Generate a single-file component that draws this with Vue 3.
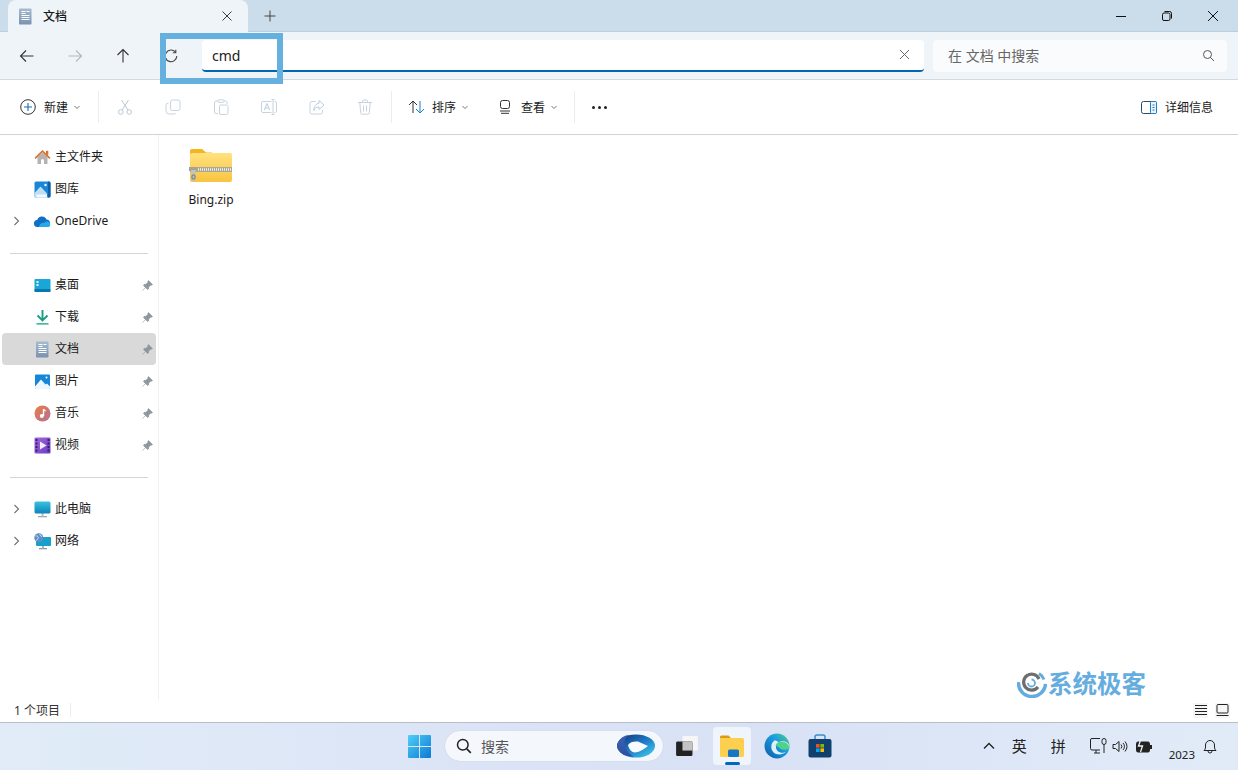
<script setup>
const icons = {
  home: '<path d="M3.500 8v7h3.500v-3.500a1.500 1.500 0 0 1 3 0V15h3.500V8L8.500 3.500z" fill="#b7b3b0"/><path d="M.5 8.800 8.500 1l8 7.800-1.200 1.100-6.800-6.600-6.800 6.600z" fill="#d8722f"/><rect x="12" y="1.800" width="2.300" height="4" fill="#d8722f"/>',
  gallery: '<rect x=".5" y=".5" width="16" height="16" rx="1.500" fill="#1b86d8"/><path d="M14 .5h1A1.500 1.500 0 0 1 16.500 2v13a1.500 1.500 0 0 1-1.500 1.500h-1z" fill="#0f5fa8"/><path d="M.5 12 6.500 5.500 13 12.500v4H2A1.500 1.500 0 0 1 .5 15z" fill="#bfdff6"/><rect x="2.500" y="13.500" width="10.500" height="3" fill="#f4fafe"/><circle cx="11.500" cy="4" r="1.200" fill="#fff"/>',
  cloud: '<path d="M3.800 14A3.500 3.500 0 0 1 3.200 7 5 5 0 0 1 12.500 6.500 3.800 3.800 0 0 1 13 14z" fill="#0f6fc6"/><path d="M5 14c.3-3.200 3-4.900 5.500-4.200.6-1 1.900-1.500 3.100-1.200 2.200.5 3 2.700 2.500 3.800-.4.900-1.200 1.600-2.500 1.600z" fill="#28a8ea"/>',
  desktop: '<rect x=".5" y="2" width="16" height="13" rx="1" fill="#1aa6d6"/><rect x=".5" y="12" width="16" height="3" rx="1" fill="#0a77ad"/><rect x="2.500" y="4" width="2" height="2" fill="#dff5fb"/><rect x="2.500" y="7" width="2" height="2" fill="#dff5fb"/>',
  download: '<path d="M8.500 1v10M3.500 6.500 8.500 11.500 13.500 6.500" fill="none" stroke="#1c9c80" stroke-width="1.900"/><rect x="2.500" y="14" width="12" height="1.700" fill="#4ab9a2"/>',
  docs: '<defs><linearGradient id="dg" x1="0" y1="0" x2="0" y2="1"><stop offset="0" stop-color="#a6bbd2"/><stop offset="1" stop-color="#7892b0"/></linearGradient></defs><rect x="2" y=".5" width="12.500" height="16" rx=".8" fill="url(#dg)"/><path d="M4.500 3.500h4M4.500 5.500h4M9.500 3.500h3M4.500 7.500h8M4.500 9.500h8M4.500 11.500h8" stroke="#fff" stroke-width="1"/>',
  picture: '<rect x="1" y="1.500" width="15" height="14.500" rx="1" fill="#1686d9"/><path d="M1 13.500 7 6.500l4.500 5 1.500-1 3 3V15a1 1 0 0 1-1 1H2a1 1 0 0 1-1-1z" fill="#eef7fd"/><circle cx="12.500" cy="4.500" r="1" fill="#fff"/>',
  music: '<defs><linearGradient id="mg" x1="0" y1="0" x2="1" y2="1"><stop offset="0" stop-color="#ee7d3c"/><stop offset="1" stop-color="#b0709e"/></linearGradient></defs><circle cx="8.500" cy="8.500" r="8" fill="url(#mg)"/><path d="M9.500 4v7" stroke="#fff" stroke-width="1.400"/><circle cx="7.800" cy="11" r="2" fill="#fff"/><path d="M9.500 4c.3 1.300 1.300 1.700 2.300 2" stroke="#fff" stroke-width="1.200" fill="none"/>',
  video: '<defs><linearGradient id="vg" x1="0" y1="0" x2="1" y2="1"><stop offset="0" stop-color="#a267e0"/><stop offset="1" stop-color="#6b3cc0"/></linearGradient></defs><rect x=".5" y=".5" width="16" height="16" rx="1" fill="url(#vg)"/><path d="M6 4.500v8l6.500-4z" fill="#f3ecff"/><g fill="#371b70"><rect x="1.500" y="2" width="2" height="2"/><rect x="1.500" y="5.500" width="2" height="2"/><rect x="1.500" y="9" width="2" height="2"/><rect x="1.500" y="12.500" width="2" height="2"/><rect x="13.500" y="2" width="2" height="2"/><rect x="13.500" y="5.500" width="2" height="2"/><rect x="13.500" y="9" width="2" height="2"/><rect x="13.500" y="12.500" width="2" height="2"/></g>',
  pc: '<rect x="4" y="15" width="9" height="1.300" fill="#9aa8b3"/><rect x="7.500" y="12" width="2" height="3.500" fill="#b3bec6"/><defs><linearGradient id="pg" x1="0" y1="0" x2="0" y2="1"><stop offset="0" stop-color="#38c3e0"/><stop offset="1" stop-color="#0c83b8"/></linearGradient></defs><rect x=".5" y=".5" width="16" height="12" rx="1.500" fill="url(#pg)"/>',
  network: '<rect x="5" y="15" width="8" height="1.300" fill="#8a9aa6"/><rect x="8" y="12.500" width="2" height="3" fill="#a8b5be"/><rect x="2" y="4" width="15" height="9" rx="1" fill="#17a0cc"/><circle cx="4.800" cy="4.800" r="4.500" fill="#5b8fc6"/><path d="M1.500 3c1.500-.5 2.800.5 2.800 1.500S3 6 2.500 7.500M6 1c-.5 1 .5 2 2 2.500" stroke="#d8e8f5" fill="none"/>'
}

const pinned = [
  { label: '桌面', icon: 'desktop' },
  { label: '下载', icon: 'download' },
  { label: '文档', icon: 'docs', active: true },
  { label: '图片', icon: 'picture' },
  { label: '音乐', icon: 'music' },
  { label: '视频', icon: 'video' }
]
const topItems = [
  { label: '主文件夹', icon: 'home' },
  { label: '图库', icon: 'gallery' },
  { label: 'OneDrive', icon: 'cloud', expand: true }
]
const bottomItems = [
  { label: '此电脑', icon: 'pc', expand: true },
  { label: '网络', icon: 'network', expand: true }
]
</script>

<template>
  <div class="window">
    <div class="titlebar">
      <div class="tab">
        <svg class="tab-icon" width="17" height="17" viewBox="0 0 17 17" v-html="icons.docs"></svg>
        <span class="tab-title">文档</span>
        <svg class="tab-close" width="12" height="12" viewBox="0 0 12 12"><path d="M1.500 1.500l9 9M10.500 1.500l-9 9" stroke="#3c3c3c" fill="none"/></svg>
      </div>
      <svg class="tab-add" width="12" height="12" viewBox="0 0 12 12"><path d="M6 .5v11M.5 6h11" stroke="#444" fill="none"/></svg>
      <div class="win-controls">
        <svg width="12" height="12" viewBox="0 0 12 12"><path d="M1 6.500h10" stroke="#111" fill="none"/></svg>
        <svg width="12" height="12" viewBox="0 0 12 12"><rect x="1.500" y="3" width="7.500" height="7.500" rx="1.500" stroke="#111" fill="none"/><path d="M3.500 1.500h5a2 2 0 0 1 2 2v5" stroke="#111" fill="none"/></svg>
        <svg width="12" height="12" viewBox="0 0 12 12"><path d="M1 1l10 10M11 1 1 11" stroke="#111" fill="none"/></svg>
      </div>
    </div>

    <div class="navbar">
      <div class="nav-btn"><svg width="16" height="16" viewBox="0 0 16 16"><path d="M14.500 8h-13M7 2.500 1.500 8 7 13.500" stroke="#333" fill="none" stroke-width="1.100"/></svg></div>
      <div class="nav-btn"><svg width="16" height="16" viewBox="0 0 16 16"><path d="M1.500 8h13M9 2.500 14.500 8 9 13.500" stroke="#b4b8bd" fill="none" stroke-width="1.100"/></svg></div>
      <div class="nav-btn"><svg width="16" height="16" viewBox="0 0 16 16"><path d="M8 14.500v-13M2.500 7 8 1.500 13.500 7" stroke="#333" fill="none" stroke-width="1.100"/></svg></div>
      <div class="nav-btn"><svg width="14" height="14" viewBox="0 0 14 14"><path d="M11.500 3.200A5.800 5.800 0 1 0 12.800 7" stroke="#444" fill="none" stroke-width="1.100"/><path d="M11.800.8v3h-3" stroke="#444" fill="none" stroke-width="1.100"/></svg></div>
      <div class="address">
        <span class="address-text">cmd</span>
        <svg width="11" height="11" viewBox="0 0 11 11"><path d="M1 1l9 9M10 1l-9 9" stroke="#666" fill="none"/></svg>
      </div>
      <div class="search">
        <span class="search-text">在 文档 中搜索</span>
        <svg width="13" height="13" viewBox="0 0 13 13"><circle cx="5.500" cy="5.500" r="4" stroke="#555" fill="none"/><path d="M8.500 8.500l3.500 3.500" stroke="#555" fill="none"/></svg>
      </div>
    </div>

    <div class="toolbar">
      <div class="tool-group">
        <svg class="tool-plus" width="16" height="16" viewBox="0 0 16 16"><circle cx="8" cy="8" r="7.300" stroke="#333" fill="none"/><path d="M8 4v8M4 8h8" stroke="#0f6cbd" stroke-width="1.100" fill="none"/></svg>
        <span class="tool-label">新建</span>
        <svg class="chev" width="8" height="8" viewBox="0 0 8 8"><path d="M1.500 3 4 5.500 6.500 3" stroke="#777" fill="none"/></svg>
      </div>
      <i class="tool-sep sep-first"></i>
      <div class="tool-icons">
        <svg width="16" height="16" viewBox="0 0 16 16"><g stroke="#b9c9d9" fill="none"><circle cx="3.800" cy="13" r="2.300"/><circle cx="12.200" cy="13" r="2.300"/><path d="M5 11 11.500 1M11 11 4.500 1"/></g></svg>
        <svg width="16" height="16" viewBox="0 0 16 16"><g stroke="#c8d3de" fill="none"><rect x="5.500" y="1" width="9.500" height="10.500" rx="2"/><path d="M3.500 4A2.500 2.500 0 0 0 1 6.500V12a3 3 0 0 0 3 3h5a2.500 2.500 0 0 0 2-1.200"/></g></svg>
        <svg width="16" height="16" viewBox="0 0 16 16"><g stroke="#c8d3de" fill="none"><path d="M5 2H3a1.500 1.500 0 0 0-1.500 1.500V13A1.500 1.500 0 0 0 3 14.500h2M11 2h1.500A1.500 1.500 0 0 1 14 3.500V5"/><rect x="5" y=".8" width="6" height="2.500" rx=".8"/><rect x="6.500" y="6" width="8.500" height="9.500" rx="1.500"/></g></svg>
        <svg width="16" height="16" viewBox="0 0 16 16"><g stroke="#c8d3de" fill="none"><path d="M10.500 2.500H2a1.500 1.500 0 0 0-1.500 1.500v8A1.500 1.500 0 0 0 2 13.500h8.500M13.500 2.500H14A1.500 1.500 0 0 1 15.500 4v8a1.500 1.500 0 0 1-1.500 1.500h-.5M12 .5v15M10.500.5h3M10.500 15.500h3"/><path d="M3.300 11 6 4.500 8.700 11M4.300 9h3.400" stroke="#b8cee4"/></g></svg>
        <svg width="16" height="16" viewBox="0 0 16 16"><g stroke="#c8d3de" fill="none"><path d="M6.500 2.500H3A2 2 0 0 0 1 4.500V13a2 2 0 0 0 2 2h8.500a2 2 0 0 0 2-2v-2"/><path d="M10 1.500 15 6l-5 4.500V8C7 8 5.500 9.500 4.800 11.500 4.800 7.500 7 4.500 10 4.300z" stroke="#b8cee4"/></g></svg>
        <svg width="16" height="16" viewBox="0 0 16 16"><g stroke="#c8d3de" fill="none"><path d="M1 3.500h14M5.500 3.500V2.200A1.200 1.200 0 0 1 6.700 1h2.600a1.200 1.200 0 0 1 1.200 1.200v1.300M2.800 3.500l.9 10.300A1.500 1.500 0 0 0 5.200 15.200h5.600a1.500 1.500 0 0 0 1.500-1.400l.9-10.300M6.500 6.500v6M9.500 6.500v6"/></g></svg>
      </div>
      <i class="tool-sep sep-edit"></i>
      <div class="tool-group sort">
        <svg class="tool-ic" width="17" height="16" viewBox="0 0 17 16"><path d="M5 14V2M1 6l4-4 4 4" stroke="#333" fill="none"/><path d="M12 2v12M8 10l4 4 4-4" stroke="#1d7fc9" fill="none"/></svg>
        <span class="tool-label">排序</span>
        <svg class="chev" width="8" height="8" viewBox="0 0 8 8"><path d="M1.500 3 4 5.500 6.500 3" stroke="#777" fill="none"/></svg>
      </div>
      <div class="tool-group view">
        <svg class="tool-ic" width="12" height="14" viewBox="0 0 12 14"><rect x="1.500" y=".5" width="9" height="8" rx="2" stroke="#333" fill="none"/><path d="M1 11h10M2 13.300h8" stroke="#333" fill="none"/></svg>
        <span class="tool-label">查看</span>
        <svg class="chev" width="8" height="8" viewBox="0 0 8 8"><path d="M1.500 3 4 5.500 6.500 3" stroke="#777" fill="none"/></svg>
      </div>
      <i class="tool-sep"></i>
      <div class="dots"><i></i><i></i><i></i></div>
      <div class="details">
        <svg width="16" height="13" viewBox="0 0 16 13"><rect x=".5" y=".5" width="15" height="12" rx="2" stroke="#2f4a5e" fill="#fff"/><rect x="9.500" y=".5" width="6" height="12" rx="1" stroke="#1e7dc4" fill="#e8f3fb"/><path d="M11.500 4h2M11.500 6.500h2M11.500 9h2" stroke="#1e7dc4" fill="none"/></svg>
        <span class="tool-label">详细信息</span>
      </div>
    </div>

    <div class="main">
      <aside class="sidebar">
        <div class="group">
          <div v-for="item in topItems" :key="item.label" class="row">
            <svg v-if="item.expand" class="expander" width="8" height="10" viewBox="0 0 8 10"><path d="M1.500 1 5.500 5 1.500 9" stroke="#777" fill="none" stroke-width="1.200"/></svg>
            <svg class="row-icon" width="17" height="17" viewBox="0 0 17 17" v-html="icons[item.icon]"></svg>
            <span class="row-label">{{ item.label }}</span>
          </div>
        </div>
        <div class="divider"></div>
        <div class="group">
          <div v-for="item in pinned" :key="item.label" class="row" :class="{ active: item.active }">
            <svg class="row-icon" width="17" height="17" viewBox="0 0 17 17" v-html="icons[item.icon]"></svg>
            <span class="row-label">{{ item.label }}</span>
            <svg class="pin" width="11" height="11" viewBox="0 0 11 11"><path d="M6.500.5 10.500 4.500 9.500 5.200 8.800 5 6.800 7 6.500 9 5.500 9.500 1.500 5.500 2 4.500 4 4.200 6 2.200 5.800 1.500zM3.200 7.800.5 10.500" fill="#8c979f" stroke="#8c979f" stroke-width=".6"/></svg>
          </div>
        </div>
        <div class="divider"></div>
        <div class="group">
          <div v-for="item in bottomItems" :key="item.label" class="row">
            <svg class="expander" width="8" height="10" viewBox="0 0 8 10"><path d="M1.500 1 5.500 5 1.500 9" stroke="#777" fill="none" stroke-width="1.200"/></svg>
            <svg class="row-icon" width="17" height="17" viewBox="0 0 17 17" v-html="icons[item.icon]"></svg>
            <span class="row-label">{{ item.label }}</span>
          </div>
        </div>
      </aside>
      <section class="files">
        <div class="file">
          <svg width="44" height="35" viewBox="0 0 44 35">
            <defs><linearGradient id="fz" x1="0" y1="0" x2="0" y2="1"><stop offset="0" stop-color="#ffe27e"/><stop offset="1" stop-color="#f9c440"/></linearGradient></defs>
            <path d="M1 3a2 2 0 0 1 2-2h10l4 3.500h6V10H1z" fill="#f4b520"/>
            <rect x="1" y="5" width="42" height="29" rx="2" fill="url(#fz)"/>
            <rect x="1" y="19" width="42" height="5" fill="#a9a89a"/>
            <path d="M7 21.500h35" stroke="#f0efe2" stroke-width="2.400" stroke-dasharray="1 1"/>
            <rect x="0" y="19" width="8" height="4" fill="#a5a395"/>
            <rect x="2" y="22" width="5" height="11" fill="#c6c3ae"/>
            <rect x="3" y="27" width="3" height="4" rx="1" fill="none" stroke="#77766a"/>
          </svg>
          <span class="file-name">Bing.zip</span>
        </div>
      </section>
    </div>

    <div class="statusbar">
      <span class="status-text">1 个项目</span>
      <i class="status-sep"></i>
      <div class="view-btns">
        <span class="view-btn"><svg width="14" height="12" viewBox="0 0 14 12"><path d="M1 1.500h12M1 4.500h12M1 7.500h12M1 10.500h12" stroke="#222" fill="none"/></svg></span>
        <span class="view-btn"><svg width="13" height="12" viewBox="0 0 13 12"><rect x="1" y=".5" width="11" height="8.500" rx="1" stroke="#222" fill="none"/><path d="M.5 11.500h12" stroke="#222" fill="none"/></svg></span>
      </div>
    </div>

    <div class="taskbar">
      <div class="task-center">
        <svg class="start" width="23" height="23" viewBox="0 0 24 24">
          <defs><linearGradient id="wg" x1="0" y1="0" x2="1" y2="1"><stop offset="0" stop-color="#4fd0f5"/><stop offset="1" stop-color="#0c78d6"/></linearGradient></defs>
          <path d="M0 1a1 1 0 0 1 1-1h10.500v11.500H0zM12.500 0H23a1 1 0 0 1 1 1v10.500H12.500zM0 12.500h11.500V24H1a1 1 0 0 1-1-1zM12.500 12.500H24V23a1 1 0 0 1-1 1H12.500z" fill="url(#wg)"/>
        </svg>
        <div class="task-search">
          <svg width="16" height="16" viewBox="0 0 16 16"><circle cx="6.800" cy="6.800" r="5.300" stroke="#222" stroke-width="1.500" fill="none"/><path d="M10.800 10.800l4 4" stroke="#222" stroke-width="1.700" fill="none"/></svg>
          <span class="task-search-text">搜索</span>
          <svg class="copilot" width="38" height="24" viewBox="0 0 38 24">
            <defs>
              <linearGradient id="cp" x1="0" y1="0" x2="1" y2="1"><stop offset="0" stop-color="#14306e"/><stop offset=".5" stop-color="#1d78c6"/><stop offset="1" stop-color="#45d4ee"/></linearGradient>
              <linearGradient id="cl" x1="0" y1="0" x2="0" y2="1"><stop offset="0" stop-color="#3a63b4"/><stop offset="1" stop-color="#2f4f9e"/></linearGradient>
            </defs>
            <ellipse cx="19" cy="12" rx="19" ry="11.500" fill="url(#cp)"/>
            <path d="M11 11c2-3 6-4 10-3.500l10 4.500c-4 3-8 6-13 6.500-3 .2-6-3-7-7.500z" fill="#f7fbff"/>
            <path d="M0 12C1 6 6 1.500 12 .8 8 3.500 6.500 7.500 8.500 13c1.200 4 4 7.500 8 9.500C8 23 1 18.500 0 12z" fill="url(#cl)"/>
          </svg>
        </div>
        <svg class="taskview" width="22" height="20" viewBox="0 0 24 22"><rect x="7" y="0" width="17" height="16" rx="1.500" fill="#f6f6f6"/><rect x="0" y="6" width="18" height="16" rx="1.500" fill="#222"/><rect x="7" y="6" width="11" height="10" fill="#c4c4c4"/></svg>
        <div class="task-app">
          <svg width="24" height="22" viewBox="0 0 24 22"><path d="M0 2a1.500 1.500 0 0 1 1.500-1.500h7l3 3H0z" fill="#d99a14"/><rect x="0" y="3" width="24" height="19" rx="1.500" fill="#fcd04e"/><rect x="8" y="14.500" width="11" height="7.500" rx="1.500" fill="#1477c4"/></svg>
          <i class="indicator"></i>
        </div>
        <svg class="edge" width="26" height="26" viewBox="0 0 25 25">
          <defs><linearGradient id="eg" x1="0" y1="1" x2="1" y2="0"><stop offset="0" stop-color="#0c59a4"/><stop offset=".6" stop-color="#1b9de2"/><stop offset="1" stop-color="#52d17c"/></linearGradient></defs>
          <circle cx="12.500" cy="12.500" r="12" fill="url(#eg)"/>
          <path d="M24.500 13.500c0-3-3-5.500-6.500-5.500-4 0-6.500 2.500-6.500 5.500 0 3.500 3.500 6 7 5.500l2.500-1c-2 2-5 3-8 2.500-3.500-.5-6-3.500-6-7.500 0-3 2-5 3.500-6" fill="#e9f5fb" opacity=".95"/>
          <path d="M11 12c1-2.500 3.500-3.500 6-3.500s6 1 7.500 5c0 2-3 3-6 2.500-3-.4-3-2-7.500-4z" fill="#4fd28a"/>
        </svg>
        <svg class="store" width="24" height="24" viewBox="0 0 24 24"><path d="M7 6V3a2 2 0 0 1 2-2h6a2 2 0 0 1 2 2v3" stroke="#3a8ecb" stroke-width="1.500" fill="none"/><rect x="0.500" y="5" width="23" height="18.500" rx="2" fill="#10406e"/><rect x="8" y="10" width="3.600" height="3.600" fill="#f25022"/><rect x="12.400" y="10" width="3.600" height="3.600" fill="#7fba00"/><rect x="8" y="14.400" width="3.600" height="3.600" fill="#00a4ef"/><rect x="12.400" y="14.400" width="3.600" height="3.600" fill="#ffb900"/></svg>
      </div>
      <div class="tray">
        <svg class="tray-chev" width="12" height="8" viewBox="0 0 12 8"><path d="M1 6.500 6 1.500l5 5" stroke="#222" stroke-width="1.300" fill="none"/></svg>
        <span class="ime first">英</span>
        <span class="ime">拼</span>
        <svg class="tray-net" width="17" height="16" viewBox="0 0 17 16"><path d="M10 12H2a1.500 1.500 0 0 1-1.500-1.500V2A1.500 1.500 0 0 1 2 .5h8M4 15h6M6 12v3" stroke="#222" fill="none"/><rect x="12" y=".5" width="4" height="6" rx="2" stroke="#222" fill="none"/><path d="M14 6.500V15" stroke="#222" fill="none"/></svg>
        <svg class="tray-vol" width="17" height="13" viewBox="0 0 17 13"><path d="M1 4.500h2.500L7 1.500v10l-3.500-3H1z" stroke="#222" fill="none"/><path d="M9 4.500a3 3 0 0 1 0 4M11 3a5 5 0 0 1 0 7M13 1.500a8 8 0 0 1 0 10" stroke="#222" fill="none"/></svg>
        <svg class="tray-bat" width="16" height="15" viewBox="0 0 16 15"><rect x=".5" y="3" width="13" height="10" rx="1.500" fill="#222" stroke="#222"/><rect x="14" y="6" width="2" height="4" fill="#222"/><path d="M5 0 2.500 7h4L4.500 13" stroke="#eef4fb" stroke-width="1.300" fill="none"/></svg>
        <span class="clock">2023</span>
        <svg class="tray-bell" width="14" height="15" viewBox="0 0 14 15"><path d="M1 11.500c1-1 1.500-2 1.500-3.500V6a4.500 4.500 0 0 1 9 0v2c0 1.500.5 2.500 1.500 3.500zM5 11.500v.5a2 2 0 0 0 4 0v-.5" stroke="#222" fill="none"/></svg>
      </div>
    </div>

    <div class="callout"></div>

    <div class="watermark">
      <svg width="30" height="27" viewBox="0 0 30 27">
        <path d="M1.500 11A13.500 13.500 0 0 0 28.500 13" stroke="#63acdf" stroke-width="3.500" fill="none"/>
        <path d="M22 2.500a12 12 0 0 1 5 6" stroke="#63acdf" stroke-width="3" fill="none"/>
        <path d="M21 16A8 8 0 1 1 22 8" stroke="#6e6e6e" stroke-width="3.200" fill="none"/>
        <path d="M11 12a3.500 3.500 0 1 0 3.500-3.500" stroke="#63acdf" stroke-width="1.800" fill="none"/>
      </svg>
      <span>系统极客</span>
    </div>
  </div>
</template>

<style scoped>
.window {
  position: relative;
  width: 1238px;
  height: 770px;
  display: flex;
  flex-direction: column;
  overflow: hidden;
  background: #fff;
  color: #1a1a1a;
  font-family: "Noto Sans", "Noto Sans CJK SC", sans-serif;
  font-size: 12px;
}

.titlebar {
  height: 32px;
  flex: none;
  display: flex;
  align-items: flex-end;
  padding-left: 8px;
  background: #cbdcea;
  border-bottom: 1px solid #bccfdf;
  box-sizing: border-box;
}
.tab {
  width: 240px;
  height: 32px;
  margin-bottom: -1px;
  box-sizing: border-box;
  display: flex;
  align-items: center;
  padding: 0 15px 0 9px;
  background: #eff4f9;
  border-radius: 8px 8px 0 0;
}
.tab-icon { margin-right: 9px; }
.tab-title { flex: 1; font-weight: 500; }
.tab-add { margin: 0 0 9px 16px; }
.win-controls {
  margin-left: auto;
  height: 31px;
  display: flex;
  align-items: center;
  justify-content: flex-end;
  gap: 34px;
  padding: 0 19px 0 0;
}

.navbar {
  height: 48px;
  flex: none;
  display: flex;
  align-items: center;
  background: #eff4f9;
  border-bottom: 1px solid #d5d9de;
  box-sizing: border-box;
  padding: 0 11px 0 3px;
}
.nav-btn {
  width: 48px;
  display: flex;
  justify-content: center;
}
.address {
  width: 722px;
  height: 32px;
  margin-left: 7px;
  box-sizing: border-box;
  display: flex;
  align-items: center;
  justify-content: space-between;
  padding: 0 14px 0 10px;
  background: #fff;
  border-radius: 4px;
  border-bottom: 2px solid #0067b0;
}
.address-text { font-size: 14px; color: #222; margin-top: 2px; }
.search {
  width: 294px;
  height: 32px;
  margin-left: 9px;
  box-sizing: border-box;
  display: flex;
  align-items: center;
  justify-content: space-between;
  padding: 0 12px 0 15px;
  background: #f9fbfd;
  border-radius: 4px;
}
.search-text { font-size: 14px; color: #666; margin-top: -2px; }

.toolbar {
  height: 55px;
  flex: none;
  display: flex;
  align-items: center;
  padding: 0 25px 0 20px;
  border-bottom: 1px solid #d0d3d7;
  box-sizing: border-box;
}
.tool-group {
  display: flex;
  align-items: center;
}
.tool-plus { margin-right: 8px; }
.tool-label { color: #1a1a1a; }
.chev { margin-left: 5px; }
.tool-sep {
  width: 1px;
  height: 32px;
  background: #ebecee;
  margin-left: 16px;
}
.sep-first { margin-left: 17px; }
.sep-edit { margin-left: 18px; }
.tool-icons {
  display: flex;
  align-items: center;
  gap: 32px;
  padding-left: 18px;
}
.sort { margin-left: 16px; }
.sort .tool-ic { margin-right: 7px; }
.view { margin-left: 30px; }
.view .tool-ic { margin-right: 10px; }
.dots {
  display: flex;
  gap: 3px;
  margin-left: 17px;
}
.dots i {
  width: 3px;
  height: 3px;
  border-radius: 50%;
  background: #222;
}
.details {
  margin-left: auto;
  display: flex;
  align-items: center;
  gap: 8px;
}

.main {
  flex: 1;
  min-height: 0;
  display: flex;
}
.sidebar {
  width: 159px;
  flex: none;
  box-sizing: border-box;
  padding: 6px 2px 0;
  border-right: 1px solid #f1f1f1;
}
.row {
  position: relative;
  height: 32px;
  display: flex;
  align-items: center;
  padding-left: 32px;
  border-radius: 4px;
  color: #1a1a1a;
}
.row.active { background: #d9d9d9; }
.row-icon { margin-right: 4px; flex: none; }
.row-label { margin-top: -2px; }
.expander {
  position: absolute;
  left: 11px;
  top: 11px;
}
.pin {
  position: absolute;
  right: 3px;
  top: 11px;
}
.divider {
  height: 1px;
  margin: 16px 8px 15px;
  background: #d4d4d4;
}
.files {
  flex: 1;
  padding: 13px 0 0 22px;
}
.file {
  width: 60px;
  display: flex;
  flex-direction: column;
  align-items: center;
  gap: 8px;
}
.file-name { color: #1a1a1a; }

.statusbar {
  height: 22px;
  flex: none;
  display: flex;
  align-items: center;
  box-sizing: border-box;
  padding: 0 8px 2px 14px;
}
.status-text { color: #333; }
.status-sep {
  width: 1px;
  height: 14px;
  margin-left: 10px;
  background: #ececec;
}
.view-btns {
  margin-left: auto;
  display: flex;
  gap: 7px;
}
.view-btn {
  width: 15px;
  height: 15px;
  display: flex;
  align-items: center;
  justify-content: center;
  background: #f6f6f6;
}

.taskbar {
  height: 48px;
  flex: none;
  display: flex;
  align-items: center;
  box-sizing: border-box;
  padding-bottom: 1px;
  border-top: 1px solid #b9bec6;
  background: linear-gradient(90deg, #e1ecf8 0%, #dbe4f6 40%, #d9e2f5 60%, #e1ebf8 100%);
}
.task-center {
  display: flex;
  align-items: center;
  padding-left: 408px;
}
.start { flex: none; }
.task-search {
  width: 218px;
  height: 30px;
  margin-left: 14px;
  box-sizing: border-box;
  display: flex;
  align-items: center;
  padding: 0 8px 1px 11px;
  background: #f4f7fc;
  border-radius: 15px;
  box-shadow: 0 0 1px #b8c0cc;
}
.task-search-text {
  margin-left: 9px;
  font-size: 14px;
  color: #555;
}
.copilot { margin-left: auto; }
.taskview { margin-left: 13px; }
.task-app {
  position: relative;
  width: 38px;
  height: 38px;
  margin-left: 15px;
  display: flex;
  align-items: center;
  justify-content: center;
  background: #f0f4fb;
  border-radius: 4px;
}
.indicator {
  position: absolute;
  left: 12px;
  bottom: 0;
  width: 15px;
  height: 3px;
  border-radius: 2px;
  background: #0067c0;
}
.edge { margin-left: 13px; }
.store { margin-left: 18px; }
.tray {
  margin-left: auto;
  display: flex;
  align-items: center;
  padding-right: 21px;
}
.ime { font-size: 15px; color: #222; margin: -2px 0 0 24px; }
.ime.first { margin-left: 17px; }
.tray-net { margin-left: 24px; }
.tray-vol { margin-left: 5px; }
.tray-bat { margin-left: 7px; }
.clock { margin: 16px 0 0 17px; color: #222; font-size: 11.500px; }
.tray-bell { margin-left: 8px; }

.callout {
  position: absolute;
  left: 160px;
  top: 33px;
  width: 123px;
  height: 51px;
  box-sizing: border-box;
  border: 6px solid #66b0e0;
}
.watermark {
  position: absolute;
  left: 1017px;
  top: 669px;
  display: flex;
  align-items: center;
  gap: 1px;
  color: #66addf;
  font-size: 24.500px;
  font-weight: 700;
  line-height: 30px;
}
</style>
